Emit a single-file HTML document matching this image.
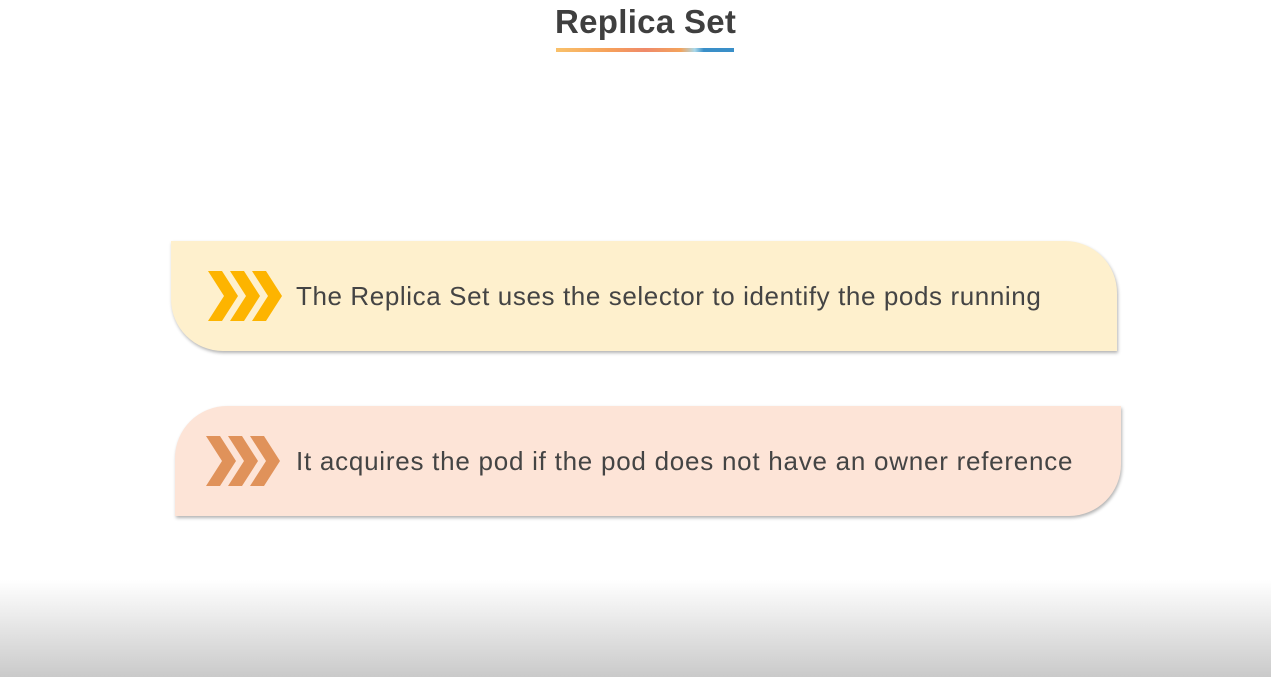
<!DOCTYPE html>
<html><head><style>
body{margin:0;width:1271px;height:677px;background:#fff;position:relative;overflow:hidden;font-family:"Liberation Sans",sans-serif}
.title{position:absolute;left:555px;top:3px;font-size:33px;font-weight:bold;color:#3f3f3f;letter-spacing:0.3px;white-space:nowrap}
.ul{position:absolute;left:556px;top:48px;width:178px;height:4px;background:linear-gradient(90deg,#f9c16a 0%,#f6a05a 30%,#ef8a6a 50%,#f3a35c 70%,#a8d8ea 78%,#3a8fc8 83%,#3a8fc8 100%)}
.box{position:absolute;height:110px;width:946px;box-shadow:1px 2px 3px rgba(0,0,0,.3)}
.b1{left:171px;top:241px;background:#fef0cd;border-radius:0 52px 0 52px}
.b2{left:175px;top:406px;background:#fde4d7;border-radius:52px 0 52px 0}
.t{position:absolute;left:125px;top:40px;font-size:26px;color:#444;white-space:nowrap;letter-spacing:0.6px}
.bot{position:absolute;left:0;top:580px;width:1271px;height:97px;background:linear-gradient(#fff,#cacaca)}
svg{position:absolute}
</style></head><body>
<div class="title">Replica Set</div>
<div class="ul"></div>
<div class="box b1"><svg style="left:37px;top:30px" width="76" height="52"><g fill="#fdb400"><polygon points="0,0 14,0 30,25 14,50 0,50 16,25"/><polygon points="22,0 36,0 52,25 36,50 22,50 38,25"/><polygon points="44,0 58,0 74,25 58,50 44,50 60,25"/></g></svg><div class="t">The Replica Set uses the selector to identify the pods running</div></div>
<div class="box b2"><svg style="left:31px;top:30px" width="76" height="52"><g fill="#e0925a"><polygon points="0,0 14,0 30,25 14,50 0,50 16,25"/><polygon points="22,0 36,0 52,25 36,50 22,50 38,25"/><polygon points="44,0 58,0 74,25 58,50 44,50 60,25"/></g></svg><div class="t" style="left:121px;letter-spacing:0.75px">It acquires the pod if the pod does not have an owner reference</div></div>
<div class="bot"></div>
</body></html>
